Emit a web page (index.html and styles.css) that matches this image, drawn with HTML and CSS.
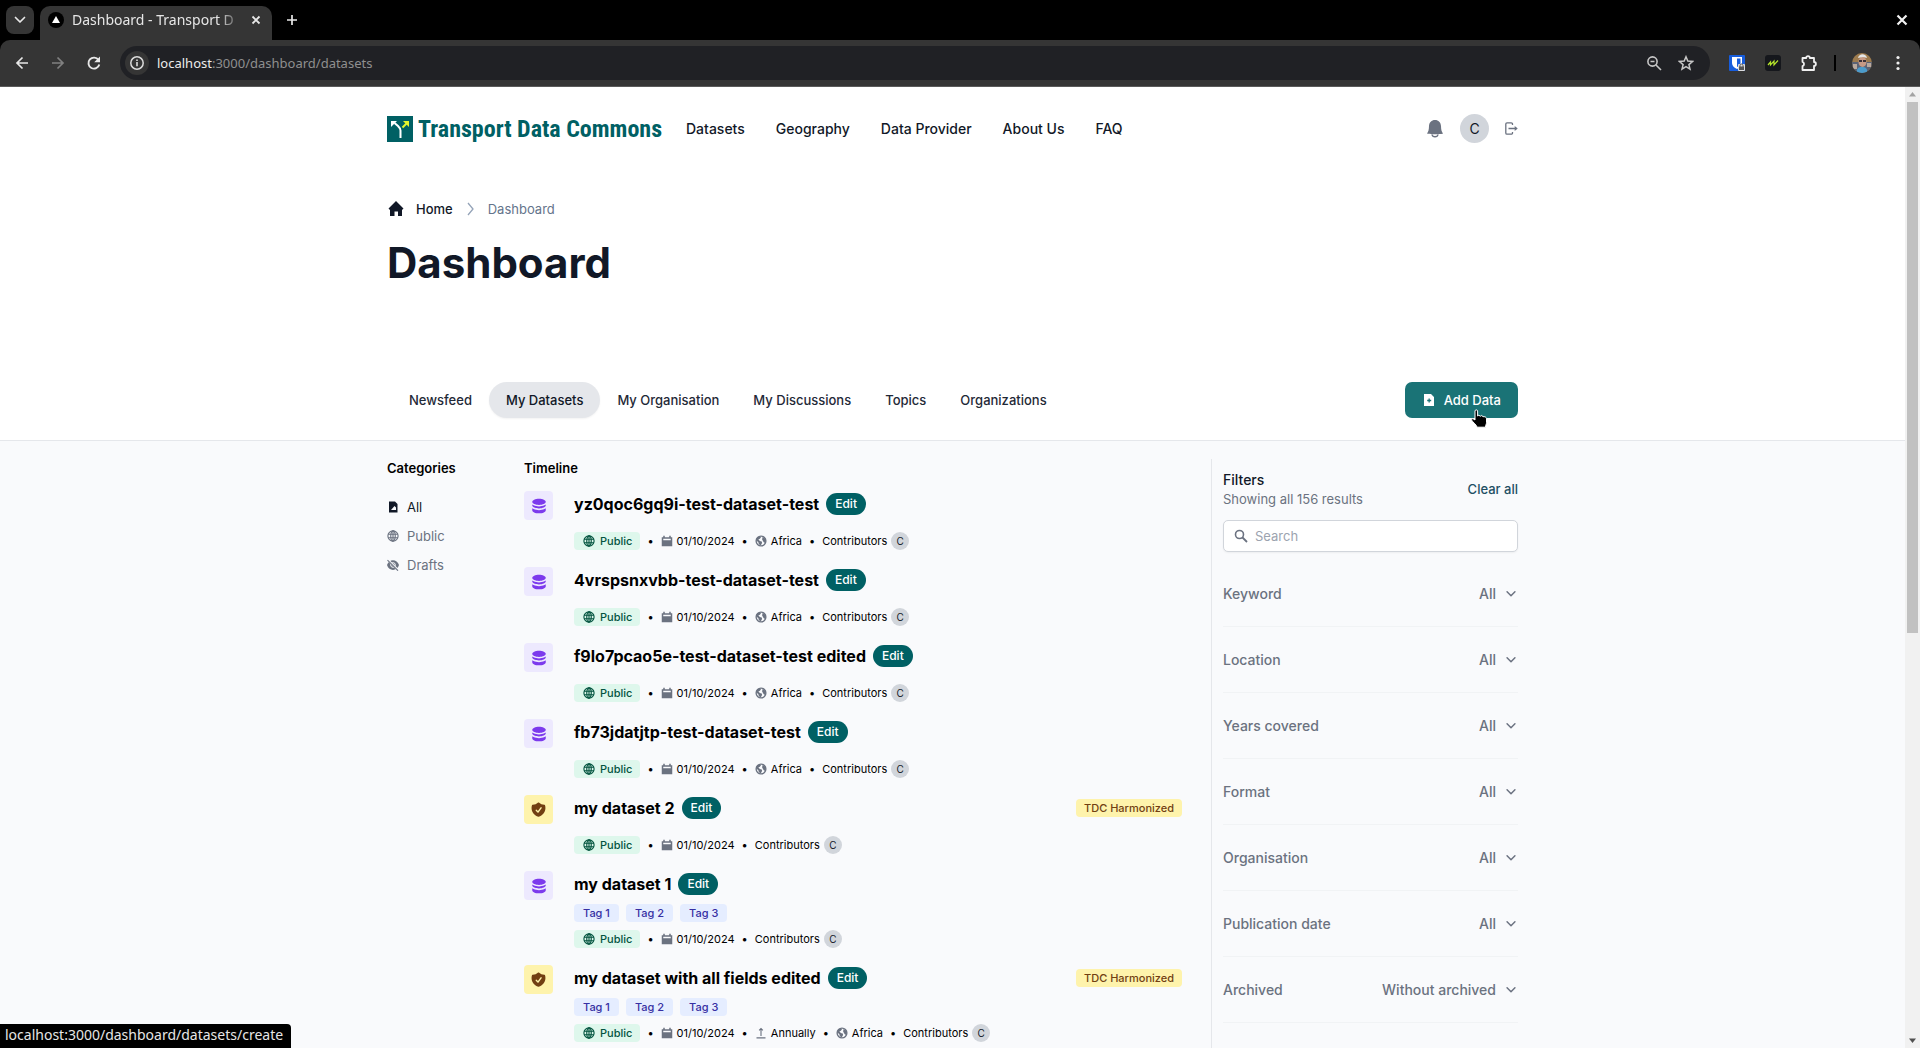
FILE: index.html
```html
<!DOCTYPE html>
<html lang="en">
<head>
<meta charset="utf-8">
<meta name="viewport" content="width=device-width, initial-scale=1">
<title>Dashboard - Transport Data Commons</title>
<link rel="stylesheet" href="styles.css">
</head>
<body>
<svg class="sprite" aria-hidden="true">
  <symbol id="i-db" viewBox="0 0 24 24"><path d="M21 6.4c0 2.3-4 4.2-9 4.2S3 8.700 3 6.400 7 2.200 12 2.200s9 1.900 9 4.200z"/><path d="M12 12.500c2.700 0 5.200-.5 7.100-1.400a8.500 8.500 0 0 0 1.700-1c.1.300.2.600.2.900 0 2.300-4 4.200-9 4.200s-9-1.900-9-4.200c0-.3.100-.6.200-.9a8.500 8.500 0 0 0 1.700 1c1.900.9 4.400 1.400 7.100 1.400z"/><path d="M12 17.500c2.700 0 5.200-.5 7.100-1.400a8.500 8.500 0 0 0 1.700-1.100c.1.300.2.700.2 1v1.500c0 2.300-4 4.300-9 4.300s-9-2-9-4.300V16c0-.3.100-.7.200-1a8.500 8.500 0 0 0 1.700 1.100c1.900.9 4.400 1.400 7.100 1.400z"/></symbol>
  <symbol id="i-shield" viewBox="0 0 24 24"><path fill-rule="evenodd" d="M12.500 2.200a.8.800 0 0 0-1 0 11.200 11.200 0 0 1-7.900 3.100.8.800 0 0 0-.7.500A12.700 12.700 0 0 0 2.200 10c0 5.900 4 10.900 9.600 12.300h.4c5.600-1.400 9.600-6.400 9.600-12.300 0-1.500-.2-2.900-.7-4.200a.8.800 0 0 0-.7-.5 11.200 11.200 0 0 1-7.900-3.100zm3.900 8a1 1 0 0 0-1.600-1.200l-3.600 5-1.700-1.700a1 1 0 0 0-1.400 1.400l2.500 2.500a1 1 0 0 0 1.500-.1z"/></symbol>
  <symbol id="i-globe" viewBox="0 0 16 16"><g fill="none" stroke="currentColor" stroke-width="1.500"><circle cx="8" cy="8" r="6.800"/><ellipse cx="8" cy="8" rx="3" ry="6.800"/><path d="M8 1v14M1.500 5.700h13M1.500 10.300h13"/></g></symbol>
  <symbol id="i-earth" viewBox="0 0 16 16"><circle cx="8" cy="8" r="6.500" fill="none" stroke="currentColor" stroke-width="1.800"/><path d="M1.500 7 3 3l3.500-1.500L8 3 6.500 5 4.500 6l2 2 3 1-.5 2.500L7.500 14 5 12 4.500 9.500zM10 2.500 14 5l.5 3-2 2.500-1.500-2L9.500 6z"/></symbol>
  <symbol id="i-cal" viewBox="0 0 16 16"><path fill-rule="evenodd" d="M3 1h2v2h6V1h2v2h2v12H1V3h2zm0 4v2h10V5z"/></symbol>
  <symbol id="i-up" viewBox="0 0 16 16"><path d="M8 12V2M5.500 4.500 8 2l2.500 2.500M2 14.500h12" fill="none" stroke="currentColor" stroke-width="1.500"/></symbol>
  <symbol id="i-down" viewBox="0 0 16 16"><path d="m3.500 5.500 4.500 4.500 4.500-4.500" fill="none" stroke="currentColor" stroke-width="1.700" stroke-linecap="round" stroke-linejoin="round"/></symbol>
</svg>

<div class="window">
  <div class="tabstrip">
    <button class="tab-search" aria-label="Search tabs"><svg width="16" height="16"><use href="#i-down"/></svg></button>
    <div class="tab">
      <svg class="favicon" width="16" height="16" viewBox="0 0 16 16"><circle cx="8" cy="8" r="8" fill="#000"/><path d="m8 4 4 7H4z" fill="#fff"/></svg>
      <span class="tab-title">Dashboard - Transport D</span>
      <button class="plain" aria-label="Close tab"><svg width="10" height="10" viewBox="0 0 10 10"><path d="m1.500 1.500 7 7m0-7-7 7" stroke="#e8e8e8" stroke-width="1.800"/></svg></button>
    </div>
    <button class="plain new-tab" aria-label="New tab"><svg width="12" height="12" viewBox="0 0 12 12"><path d="M6 1v10M1 6h10" stroke="#e8e8e8" stroke-width="1.700"/></svg></button>
    <button class="plain close-window" aria-label="Close window"><svg width="12" height="12" viewBox="0 0 12 12"><path d="m1.500 1.500 9 9m0-9-9 9" stroke="#f2f2f2" stroke-width="2.200"/></svg></button>
  </div>
  <div class="toolbar">
    <div class="nav-buttons">
      <button class="plain" aria-label="Back"><svg width="16" height="16" viewBox="0 0 16 16"><path d="M14 8H3m5.500-5.500L3 8l5.500 5.500" fill="none" stroke="#e8e8e8" stroke-width="1.700"/></svg></button>
      <button class="plain" aria-label="Forward"><svg width="16" height="16" viewBox="0 0 16 16"><path d="M2 8h11M7.500 2.500 13 8l-5.500 5.500" fill="none" stroke="#808080" stroke-width="1.700"/></svg></button>
      <button class="plain" aria-label="Reload"><svg width="16" height="16" viewBox="0 0 16 16"><path d="M13.300 9.500A5.500 5.500 0 1 1 12.500 5" fill="none" stroke="#e8e8e8" stroke-width="1.900"/><path d="M14 1.500v5.800H8.200z" fill="#e8e8e8"/></svg></button>
    </div>
    <div class="omnibox">
      <button class="site-info" aria-label="View site information"><svg width="16" height="16" viewBox="0 0 16 16"><circle cx="8" cy="8" r="6.200" fill="none" stroke="#dcdcdc" stroke-width="1.500"/><path d="M8 7v4.200M8 4.500v1.600" stroke="#dcdcdc" stroke-width="1.600"/></svg></button>
      <span class="url"><span class="host">localhost</span>:3000/dashboard/datasets</span>
      <button class="plain" aria-label="Zoom"><svg width="16" height="16" viewBox="0 0 16 16"><circle cx="6.500" cy="6.500" r="4.600" fill="none" stroke="#c7c7c7" stroke-width="1.600"/><path d="m10 10 5 5M4.500 6.500h4" stroke="#c7c7c7" stroke-width="1.600"/></svg></button>
      <button class="plain" aria-label="Bookmark this tab"><svg width="16" height="16" viewBox="0 0 16 16"><path d="m8 1.800 1.800 4.300 4.700.4-3.600 3.100 1.100 4.600-4-2.500-4 2.500 1.100-4.600L1.500 6.500l4.700-.4z" fill="none" stroke="#c7c7c7" stroke-width="1.500"/></svg></button>
    </div>
    <div class="extensions">
      <button class="plain" aria-label="Password manager"><svg width="16" height="16" viewBox="0 0 16 16"><rect width="16" height="16" rx="1" fill="#175ddc"/><path d="M3 2h10v6c0 3-2.500 5-5 6-2.500-1-5-3-5-6z" fill="#fff"/><path d="M8 3.500h3.500V8c0 2-1.500 3-3.500 4z" fill="#175ddc"/><rect x="9" y="9" width="7" height="7" rx="1" fill="#ddd"/><rect x="10" y="11.500" width="5" height="3.500" fill="#555"/><path d="M11 12v-1.500a1.500 1.500 0 0 1 3 0V12" fill="none" stroke="#555"/></svg></button>
      <button class="plain" aria-label="Daily feed"><svg width="16" height="16" viewBox="0 0 16 16"><rect width="16" height="16" rx="3" fill="#15171c"/><path d="m3 10 2.500-3v3L9 6v4l4-4.500" fill="none" stroke="#b4e32b" stroke-width="1.200"/></svg></button>
      <button class="plain" aria-label="Extensions"><svg width="16" height="16" viewBox="0 0 16 16"><path d="M1.500 3h3.700a1.800 1.800 0 0 1 3.600 0h4.200v4a1.900 1.900 0 0 1 0 3.800V15H1.500v-3.800a2.200 2.200 0 0 0 0-4.200z" fill="none" stroke="#f0f0f0" stroke-width="1.800" stroke-linejoin="round"/></svg></button>
    </div>
    <span class="divider"></span>
    <button class="plain" aria-label="Profile"><svg width="20" height="20" viewBox="0 0 20 20"><clipPath id="round"><circle cx="10" cy="10" r="10"/></clipPath><g clip-path="url(#round)"><path fill="#9d7b4e" d="M0 0h20v20H0z"/><path fill="#5c6375" d="M0 9h20v11H0z"/><path fill="#b9a99e" d="M1 11h4v5H1zM15 10h4v4h-4z"/><ellipse cx="10.500" cy="9" rx="4" ry="5" fill="#c79a85"/><path d="M6 5c1-5 8-5 9 0l-4-1z" fill="#e4e6e9"/><path d="M7 7h3v2H7zM11 7h3v2h-3z" fill="#3c3238"/><path d="M5 20c-1-5 2-6 5-6s6 1 5 6z" fill="#4b9ccc"/></g></svg></button>
    <button class="plain menu" aria-label="Menu"><svg width="16" height="16" viewBox="0 0 16 16"><circle cx="8" cy="2.500" r="1.600"/><circle cx="8" cy="8" r="1.600"/><circle cx="8" cy="13.500" r="1.600"/></svg></button>
  </div>

  <div class="viewport">
    <div class="page">
      <div class="top">
        <header class="container site-header">
          <a class="logo" href="#">
            <svg width="26" height="26" viewBox="0 0 26 26"><path fill="#006064" d="M0 0h26v26H0z"/><path d="M13.500 22v-7.500c0-2-1-3-2.500-4.500L7.500 7" fill="none" stroke="#fff" stroke-width="2"/><path d="M4 5h6L4 11z" fill="#fff"/><path d="m15.500 11.500 4-4" stroke="#e3f52c" stroke-width="2"/><path d="M22 5h-6l6 6z" fill="#e3f52c"/></svg>
            <span>Transport Data Commons</span>
          </a>
          <nav class="main-nav">
            <a href="#">Datasets</a><a href="#">Geography</a><a href="#">Data Provider</a><a href="#">About Us</a><a href="#">FAQ</a>
          </nav>
          <div class="account">
            <button class="plain" aria-label="Notifications"><svg width="18" height="18" viewBox="0 0 18 18"><path d="M9 0C5.500 0 3.200 2.500 3 6c-.1 4-.5 5.500-2 7.500.5.900 15.500.9 16 0-1.500-2-1.900-3.500-2-7.500C14.800 2.500 12.500 0 9 0z"/><path d="M6 14.500c.5 3 5.500 3 6 0" fill="none" stroke="currentColor" stroke-width="1.400"/></svg></button>
            <button class="avatar large">C</button>
            <button class="plain" aria-label="Sign out"><svg width="13" height="13" viewBox="0 0 13 13"><path d="M7.500 3V2a1.200 1.200 0 0 0-1.200-1.200H2A1.200 1.200 0 0 0 .8 2v9A1.200 1.200 0 0 0 2 12.200h4.300A1.200 1.200 0 0 0 7.500 11v-1M3.500 6.500h8" fill="none" stroke="currentColor" stroke-width="1.300"/><path d="m9.700 4 3 2.500-3 2.500z"/></svg></button>
          </div>
        </header>
        <nav class="container breadcrumb" aria-label="Breadcrumb">
          <a class="home" href="#"><svg width="18" height="18" viewBox="0 0 18 18"><path d="M9 1 16.500 8.500 15 10v6h-4v-4.500H7.500V16H3v-6L1.500 8.500z" fill="#111827"/></svg>Home</a>
          <svg width="9" height="16" viewBox="0 0 9 16"><path d="m2 2 5 6-5 6" fill="none" stroke="#94a3b8" stroke-width="1.300"/></svg>
          <a class="current" href="#">Dashboard</a>
        </nav>
        <div class="container title"><h1>Dashboard</h1></div>
        <div class="container tabs">
          <nav>
            <a href="#">Newsfeed</a><a class="active" href="#">My Datasets</a><a href="#">My Organisation</a><a href="#">My Discussions</a><a href="#">Topics</a><a href="#">Organizations</a>
          </nav>
          <div class="add-wrap">
            <button class="add"><svg width="14" height="14" viewBox="0 0 14 14"><path fill="#fff" fill-rule="evenodd" d="M2 1h7l3 3v9H2zm4.500 4.500v1.300H5.200v1.400h1.300v1.300h1.300V8.200h1.400V6.800H7.800V5.500z"/></svg>Add Data</button>
            <svg class="cursor" width="18" height="20" viewBox="0 0 18 20"><path d="M5 2c0-1.500 2.600-1.500 2.600 0v5l1.200-.8 1.500 1 1.500-.7 1.200 1.200c1.500-.3 3.500.3 3.500 2v4c0 1.500-1 2-1 4.500H7c0-2-4-4.700-5.500-7.200C1 9.500 3 9.200 5 11z" fill="#000" stroke="#fff"/></svg>
          </div>
        </div>
      </div>

      <div class="container columns">
        <aside class="categories">
          <h2>Categories</h2>
          <a class="active" href="#"><svg width="12" height="12" viewBox="0 0 12 12"><path fill-rule="evenodd" d="M2 .5h6l2.500 2.500v8.500H2zM4 9h5V6.500L7.500 5z" fill="#111827"/></svg>All</a>
          <a href="#"><svg width="12" height="12"><use href="#i-globe"/></svg>Public</a>
          <a href="#"><svg width="12" height="12" viewBox="0 0 12 12"><path d="M0 6c2-6.500 10-6.500 12 0-2 6.500-10 6.500-12 0z" fill="#6b7280"/><circle cx="6" cy="6" r="2.300" fill="none" stroke="#f9fafc"/><path d="m.5.500 11 11" stroke="#f9fafc" stroke-width="2"/><path d="m.5 1.200 10.500 10.500" stroke="#6b7280" stroke-width="1.100"/></svg>Drafts</a>
        </aside>
        <main class="timeline">
          <h2>Timeline</h2>
          <article class="item">
            <span class="type"><svg width="18" height="18"><use href="#i-db"/></svg></span>
            <div class="body">
              <div class="head"><h3>yz0qoc6gq9i-test-dataset-test</h3><button class="edit">Edit</button></div>
              <div class="meta"><span class="public"><svg width="12" height="12"><use href="#i-globe"/></svg>Public</span><i>•</i><span class="fact"><svg width="12" height="12"><use href="#i-cal"/></svg>01/10/2024</span><i>•</i><span class="fact"><svg width="12" height="12"><use href="#i-earth"/></svg>Africa</span><i>•</i><span class="fact">Contributors<span class="avatar">C</span></span></div>
            </div>
          </article>
          <article class="item">
            <span class="type"><svg width="18" height="18"><use href="#i-db"/></svg></span>
            <div class="body">
              <div class="head"><h3>4vrspsnxvbb-test-dataset-test</h3><button class="edit">Edit</button></div>
              <div class="meta"><span class="public"><svg width="12" height="12"><use href="#i-globe"/></svg>Public</span><i>•</i><span class="fact"><svg width="12" height="12"><use href="#i-cal"/></svg>01/10/2024</span><i>•</i><span class="fact"><svg width="12" height="12"><use href="#i-earth"/></svg>Africa</span><i>•</i><span class="fact">Contributors<span class="avatar">C</span></span></div>
            </div>
          </article>
          <article class="item">
            <span class="type"><svg width="18" height="18"><use href="#i-db"/></svg></span>
            <div class="body">
              <div class="head"><h3>f9lo7pcao5e-test-dataset-test edited</h3><button class="edit">Edit</button></div>
              <div class="meta"><span class="public"><svg width="12" height="12"><use href="#i-globe"/></svg>Public</span><i>•</i><span class="fact"><svg width="12" height="12"><use href="#i-cal"/></svg>01/10/2024</span><i>•</i><span class="fact"><svg width="12" height="12"><use href="#i-earth"/></svg>Africa</span><i>•</i><span class="fact">Contributors<span class="avatar">C</span></span></div>
            </div>
          </article>
          <article class="item">
            <span class="type"><svg width="18" height="18"><use href="#i-db"/></svg></span>
            <div class="body">
              <div class="head"><h3>fb73jdatjtp-test-dataset-test</h3><button class="edit">Edit</button></div>
              <div class="meta"><span class="public"><svg width="12" height="12"><use href="#i-globe"/></svg>Public</span><i>•</i><span class="fact"><svg width="12" height="12"><use href="#i-cal"/></svg>01/10/2024</span><i>•</i><span class="fact"><svg width="12" height="12"><use href="#i-earth"/></svg>Africa</span><i>•</i><span class="fact">Contributors<span class="avatar">C</span></span></div>
            </div>
          </article>
          <article class="item">
            <span class="type harmonized"><svg width="17" height="17"><use href="#i-shield"/></svg></span>
            <div class="body">
              <div class="head"><h3>my dataset 2</h3><button class="edit">Edit</button><span class="badge">TDC Harmonized</span></div>
              <div class="meta"><span class="public"><svg width="12" height="12"><use href="#i-globe"/></svg>Public</span><i>•</i><span class="fact"><svg width="12" height="12"><use href="#i-cal"/></svg>01/10/2024</span><i>•</i><span class="fact">Contributors<span class="avatar">C</span></span></div>
            </div>
          </article>
          <article class="item">
            <span class="type"><svg width="18" height="18"><use href="#i-db"/></svg></span>
            <div class="body">
              <div class="head"><h3>my dataset 1</h3><button class="edit">Edit</button></div>
              <div class="tags"><span>Tag 1</span><span>Tag 2</span><span>Tag 3</span></div>
              <div class="meta"><span class="public"><svg width="12" height="12"><use href="#i-globe"/></svg>Public</span><i>•</i><span class="fact"><svg width="12" height="12"><use href="#i-cal"/></svg>01/10/2024</span><i>•</i><span class="fact">Contributors<span class="avatar">C</span></span></div>
            </div>
          </article>
          <article class="item">
            <span class="type harmonized"><svg width="17" height="17"><use href="#i-shield"/></svg></span>
            <div class="body">
              <div class="head"><h3>my dataset with all fields edited</h3><button class="edit">Edit</button><span class="badge">TDC Harmonized</span></div>
              <div class="tags"><span>Tag 1</span><span>Tag 2</span><span>Tag 3</span></div>
              <div class="meta"><span class="public"><svg width="12" height="12"><use href="#i-globe"/></svg>Public</span><i>•</i><span class="fact"><svg width="12" height="12"><use href="#i-cal"/></svg>01/10/2024</span><i>•</i><span class="fact"><svg width="12" height="12"><use href="#i-up"/></svg>Annually</span><i>•</i><span class="fact"><svg width="12" height="12"><use href="#i-earth"/></svg>Africa</span><i>•</i><span class="fact">Contributors<span class="avatar">C</span></span></div>
            </div>
          </article>
        </main>
        <aside class="filters">
          <div class="filters-head">
            <div><h2>Filters</h2><p>Showing all 156 results</p></div>
            <button class="clear">Clear all</button>
          </div>
          <label class="search"><svg width="14" height="14" viewBox="0 0 14 14"><circle cx="5.500" cy="5.500" r="4" fill="none" stroke="#6b7280" stroke-width="1.600"/><path d="m8.500 8.500 4.500 4.500" stroke="#6b7280" stroke-width="1.800"/></svg><input type="search" placeholder="Search" aria-label="Search"></label>
          <div class="filter"><label for="keyword">Keyword</label><select id="keyword"><option>All</option></select><svg width="14" height="14"><use href="#i-down"/></svg></div>
          <div class="filter"><label for="location">Location</label><select id="location"><option>All</option></select><svg width="14" height="14"><use href="#i-down"/></svg></div>
          <div class="filter"><label for="years">Years covered</label><select id="years"><option>All</option></select><svg width="14" height="14"><use href="#i-down"/></svg></div>
          <div class="filter"><label for="format">Format</label><select id="format"><option>All</option></select><svg width="14" height="14"><use href="#i-down"/></svg></div>
          <div class="filter"><label for="organisation">Organisation</label><select id="organisation"><option>All</option></select><svg width="14" height="14"><use href="#i-down"/></svg></div>
          <div class="filter"><label for="publication">Publication date</label><select id="publication"><option>All</option></select><svg width="14" height="14"><use href="#i-down"/></svg></div>
          <div class="filter"><label for="archived">Archived</label><select id="archived"><option>Without archived</option></select><svg width="14" height="14"><use href="#i-down"/></svg></div>
        </aside>
      </div>
    </div>
    <div class="scrollbar">
      <svg width="15" height="15" viewBox="0 0 15 15"><path d="M7.500 5 11 9.500H4z" fill="#a3a3a3"/></svg>
      <div class="track"><div class="thumb"></div></div>
      <svg width="15" height="15" viewBox="0 0 15 15"><path d="M7.500 10 4 5.500h7z" fill="#505050"/></svg>
    </div>
    <div class="status">localhost:3000/dashboard/datasets/create</div>
  </div>
</div>
</body>
</html>
```
FILE: styles.css
```css
* { box-sizing: border-box; }
body { margin: 0; background: #000; color: #000; font: 13px/18px Inter, sans-serif; }
h1, h2, h3, p { margin: 0; }
a { color: inherit; text-decoration: none; }
button { font: inherit; color: inherit; border: 0; padding: 0; background: none; cursor: pointer; }
svg { display: block; flex: none; fill: currentColor; }
.sprite { position: absolute; width: 0; height: 0; }
.plain { display: flex; align-items: center; justify-content: center; }

/* Browser frame */
.window { display: flex; flex-direction: column; height: 100vh; overflow: hidden; }
.tabstrip { display: flex; align-items: center; height: 40px; flex: none; padding: 0 12px 0 6px; font: 14px/20px "Noto Sans", sans-serif; }
.tab-search { display: flex; align-items: center; justify-content: center; width: 28px; height: 28px; margin-right: 6px; border-radius: 8px; background: #353535; color: #e8e8e8; }
.tab { display: flex; align-items: center; gap: 8px; width: 232px; height: 34px; margin-top: 6px; padding: 0 11px 6px 8px; border-radius: 10px 10px 0 0; background: #353535; }
.tab-title { flex: 1; white-space: nowrap; color: #e6e6e6; -webkit-mask-image: linear-gradient(to right, #000 85%, transparent); mask-image: linear-gradient(to right, #000 85%, transparent); }
.new-tab { margin-left: 14px; }
.close-window { margin-left: auto; }
.toolbar { display: flex; align-items: center; height: 47px; flex: none; padding: 0 14px; border-bottom: 1px solid #5a5a5a; border-radius: 10px 10px 0 0; background: #353535; }
.nav-buttons { display: flex; gap: 20px; margin-right: 18px; }
.omnibox { display: flex; align-items: center; flex: 1; gap: 16px; height: 34px; padding: 0 16px 0 5px; border-radius: 17px; background: #202125; }
.site-info { display: flex; align-items: center; justify-content: center; width: 24px; height: 24px; border-radius: 12px; background: #353535; }
.url { flex: 1; margin-left: -8px; color: #8f8f8f; font: 13px/20px "Noto Sans", sans-serif; }
.host { color: #ececec; }
.extensions { display: flex; gap: 20px; margin-left: 19px; }
.divider { width: 2px; height: 16px; margin: 0 16px 0 17px; background: #000; }
.menu { margin-left: 18px; color: #f0f0f0; }

/* Page */
.viewport { position: relative; display: flex; flex: 1; min-height: 0; background: #f9fafc; }
.page { flex: 1; min-width: 0; overflow: hidden; }
.container { width: 100%; max-width: 1151px; margin: 0 auto; padding: 0 10px; }
.top { background: #fff; border-bottom: 1px solid #e5e7eb; }
.site-header { display: flex; align-items: center; height: 83px; color: #111827; }
.logo { display: flex; align-items: center; gap: 5px; width: 269px; color: #006064; font: bold 24px/28px "Roboto Condensed", "Liberation Sans Narrow", Roboto, sans-serif; white-space: nowrap; }
.main-nav { display: flex; gap: 31px; margin-left: 30px; font-size: 14px; font-weight: 500; }
.account { display: flex; align-items: center; gap: 16px; margin-left: auto; color: #6b7280; }
.avatar { display: flex; align-items: center; justify-content: center; width: 18px; height: 18px; border-radius: 50%; background: #d1d5db; color: #111827; font-size: 10px; }
.avatar.large { width: 29px; height: 29px; font-size: 14px; }
.breadcrumb { display: flex; align-items: center; height: 18px; margin-top: 30px; gap: 13px; color: #111827; font-weight: 500; }
.home { display: flex; align-items: center; gap: 11px; }
.current { color: #64748b; font-weight: 400; }
.title { padding-top: 21px; }
h1 { font-size: 42px; line-height: 48px; font-weight: 700; color: #111827; }
.tabs { display: flex; align-items: center; justify-content: space-between; padding: 95px 10px 22px 15px; }
.tabs nav { display: flex; color: #1f2937; font-weight: 500; }
.tabs nav a { padding: 9px 17px; border-radius: 18px; }
.tabs nav .active { background: #e5e7eb; color: #111827; box-shadow: 0 1px 2px #0000000d; }
.add-wrap { position: relative; }
.add { display: flex; align-items: center; gap: 8px; height: 36px; padding: 0 17px; border-radius: 7px; background: #1a7376; color: #fff; font-weight: 500; }
.cursor { position: absolute; left: 65px; top: 27px; }

.columns { display: flex; }
.categories, .timeline { padding-top: 18px; }
h2 { font-size: 13px; line-height: 18px; font-weight: 600; }
.categories { width: 137px; color: #6b7280; }
.categories h2 { margin-bottom: 21px; color: #000; }
.categories a { display: flex; align-items: center; gap: 8px; margin-bottom: 11px; }
.categories .active { color: #111827; }
.timeline { flex: 1; min-width: 0; padding-right: 29px; }
.timeline h2 { margin-bottom: 13px; }
.item { display: flex; gap: 21px; padding-bottom: 16px; }
.type { display: flex; align-items: center; justify-content: center; width: 29px; height: 29px; margin-top: 1px; border-radius: 4px; background: #ede9fe; color: #7c3aed; }
.type.harmonized { background: #fef3ac; color: #713f12; }
.body { flex: 1; }
.head { display: flex; align-items: center; height: 28px; gap: 7px; }
h3 { font-size: 16px; line-height: 24px; font-weight: 700; }
.edit { height: 22px; padding: 0 9px; border-radius: 11px; background: #006064; color: #fff; font-weight: 500; font-size: 12px; }
.badge { margin-left: auto; padding: 0 8px; border-radius: 4px; background: #fef3ac; color: #713f12; font-size: 11px; font-weight: 500; }
.meta { display: flex; align-items: center; height: 18px; margin-top: 14px; gap: 7px; font-size: 11px; }
.meta i { font-style: normal; }
.public { display: flex; align-items: center; gap: 5px; height: 18px; padding: 0 8px 0 9px; border-radius: 4px; background: #def7ec; color: #03543f; font-weight: 500; }
.fact { display: flex; align-items: center; gap: 4px; }
.fact svg { color: #6b7280; }
.tags { display: flex; gap: 7px; height: 18px; margin-top: 6px; color: #3730a3; font-size: 11px; font-weight: 500; }
.tags span { padding: 0 9px; border-radius: 4px; background: #e5edff; }
.tags + .meta { margin-top: 8px; }

.filters { width: 307px; margin-top: 18px; padding: 11px 0 40px 11px; border-left: 1px solid #e5e7eb; color: #6b7280; font-size: 14px; }
.filters-head { display: flex; align-items: center; justify-content: space-between; margin-bottom: 12px; font-size: 13px; }
.filters h2 { font-size: 14px; line-height: 20px; font-weight: 500; color: #111827; }
.clear { color: #1d4f63; font-weight: 500; }
.search { display: flex; align-items: center; gap: 7px; height: 32px; margin-bottom: 9px; padding: 0 10px; border: 1px solid #d1d5db; border-radius: 5px; background: #fff; box-shadow: 0 1px 2px #0000000d; }
.search input { flex: 1; min-width: 0; border: 0; padding: 0; outline: 0; background: none; font: inherit; font-size: 13px; }
.search input::placeholder { color: #9ca3af; }
.filter { display: flex; align-items: center; height: 66px; border-bottom: 1px solid #f1f3f5; font-weight: 500; }
.filter select { flex: 1; min-width: 0; margin-right: 8px; padding: 0; border: 0; background: none; appearance: none; color: inherit; font: inherit; text-align: right; text-align-last: right; }

.scrollbar { display: flex; flex-direction: column; width: 15px; background: #f1f1f1; }
.track { flex: 1; padding: 0 2px; }
.thumb { height: 57%; background: #c1c1c1; }
.status { position: absolute; left: 0; bottom: 0; padding: 1px 8px 3px 5px; border-radius: 0 4px 0 0; background: #000; color: #e6e6e6; font: 14px/20px "Noto Sans", sans-serif; }
```
